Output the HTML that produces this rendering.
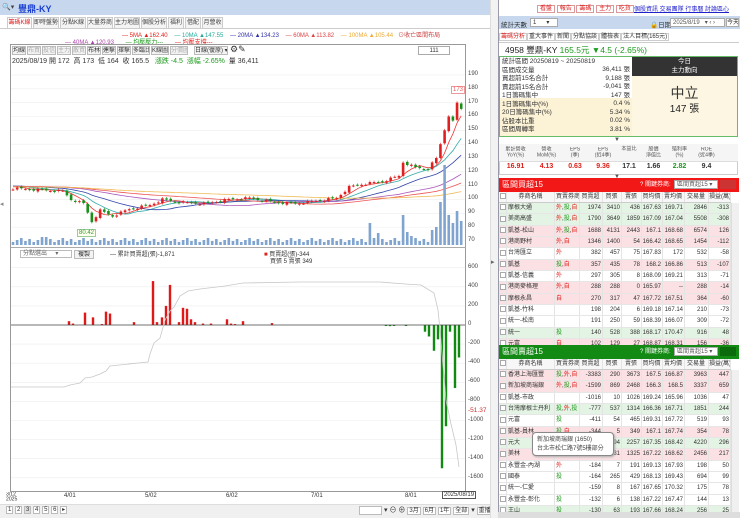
<!DOCTYPE html>
<html><head><meta charset="utf-8">
<style>
*{box-sizing:border-box;margin:0;padding:0}
body{width:740px;height:518px;overflow:hidden;background:#fff;font-family:"Liberation Sans","Noto Sans CJK TC",sans-serif;font-size:7px;color:#333;position:relative}
.a{position:absolute;white-space:nowrap}
.tab{position:absolute;top:17px;height:11px;border:1px solid #ccc;border-bottom:none;background:#f4f4f4;font-size:6px;line-height:10px;text-align:center;color:#444;overflow:hidden;white-space:nowrap}
.btn{position:absolute;height:9px;border:1px solid #bbb;background:#f3f3f3;font-size:6px;line-height:8px;text-align:center;color:#333;overflow:hidden;white-space:nowrap}
.row{position:absolute;left:0;width:232px;height:11.33px;border-bottom:1px solid #e6e6e6;font-size:6px;line-height:11px;overflow:hidden}
.row div{position:absolute;top:0;height:100%;border-right:1px solid #e4e4e4;text-align:right;padding-right:1px;overflow:hidden;white-space:nowrap}
.row div.l{text-align:left;padding-left:1px}
.hd{background:#f7f7f7;border-bottom:1px solid #ccc}
.hd div{text-align:center!important}
.p{background:#fbe1e4}.g{background:#e4f4e4}
.r{color:#e0201a}.gr{color:#1b9a1b}
.cb{display:inline-block;width:6px;height:6px;border:1px solid #aaa;background:#fff;vertical-align:middle}
.sb{border:1px solid #bbb;background:#fff;padding:0 1px}
</style></head><body>
<div class="a" style="left:0;top:0;width:740px;height:15px;background:#c7d8ee"></div>
<div class="a" style="left:498px;top:0;width:242px;height:15px;background:#fff;border-left:1px solid #aac"></div>
<div class="a" style="left:2px;top:3px;font-size:7px;color:#444">🔍▾</div>
<div class="a" style="left:18px;top:2px;font-size:9px;color:#1a3fcf;font-weight:bold">豐鼎-KY</div>
<div class="tab" style="left:7px;width:25px;color:#d22;background:#fff">籌碼K線</div>
<div class="tab" style="left:33px;width:26px">即時盤勢</div>
<div class="tab" style="left:60px;width:26px">分點K線</div>
<div class="tab" style="left:87px;width:26px">大量券商</div>
<div class="tab" style="left:114px;width:26px">主力地圖</div>
<div class="tab" style="left:141px;width:26px">個股分析</div>
<div class="tab" style="left:168px;width:16px">福利</div>
<div class="tab" style="left:185px;width:16px">借配</div>
<div class="tab" style="left:202px;width:21px">月營收</div>
<div class="a" style="left:0;top:28px;width:490px;border-top:1px solid #ccc"></div>
<div class="a" style="left:122px;top:30px;font-size:6px"><span class="r">— 5MA ▲162.40</span> &nbsp;&nbsp; <span style="color:#2a9">— 10MA ▲147.55</span> &nbsp;&nbsp; <span style="color:#33a">— 20MA ▲134.23</span> &nbsp;&nbsp; <span style="color:#d44">— 60MA ▲113.82</span> &nbsp;&nbsp; <span style="color:#ea3">— 100MA ▲105.44</span> &nbsp; <span style="color:#c44">⊙收亡區間布局</span></div>
<div class="a" style="left:65px;top:37px;font-size:6px"><span style="color:#a4a">— 40MA ▲120.93</span> &nbsp;&nbsp;&nbsp;&nbsp;&nbsp; <span class="gr">— 均壓壓力---</span> &nbsp;&nbsp;&nbsp;&nbsp;&nbsp; <span class="r">— 均壓支撐---</span></div>
<div class="a" style="left:10px;top:44px;width:456px;height:448px;border:1px solid #999"></div>
<div class="btn" style="left:12px;top:46px;width:14px">均線</div><div class="btn" style="left:27px;top:46px;width:14px;color:#aaa">布買</div><div class="btn" style="left:42px;top:46px;width:14px;color:#aaa">投信</div><div class="btn" style="left:57px;top:46px;width:14px;color:#aaa">主力</div><div class="btn" style="left:72px;top:46px;width:14px;color:#aaa">散買</div><div class="btn" style="left:87px;top:46px;width:14px">布林</div><div class="btn" style="left:102px;top:46px;width:14px">連擊</div><div class="btn" style="left:117px;top:46px;width:14px">擇擊</div><div class="btn" style="left:132px;top:46px;width:18px">多臨比</div><div class="btn" style="left:151px;top:46px;width:18px">K線圖</div><div class="btn" style="left:170px;top:46px;width:18px;color:#aaa">分價圖</div><div class="btn" style="left:194px;top:46px;width:34px">日線(復原) ▾</div>
<div class="a" style="left:230px;top:44px;font-size:9px">⚙✎</div>
<div class="a" style="left:12px;top:56px;font-size:7px">2025/08/19 開 172 &nbsp;高 173 &nbsp;低 164 &nbsp;收 165.5 &nbsp; <span class="gr">漲跌 -4.5 &nbsp;漲幅 -2.65%</span> &nbsp;量 36,411</div>
<div class="a" style="left:418px;top:46px;width:32px;height:9px;border:1px solid #aaa;font-size:6px;text-align:center;line-height:8px">111</div>
<svg class="a" style="left:0;top:0" width="497" height="518"><g id="grid" stroke="#eee" stroke-width="0.6"></g><g id="c"></g></svg>
<div class="a" id="pl" style="left:468px;top:0;font-size:6px;color:#444"></div>
<div class="a" style="left:451px;top:86px;font-size:6px;color:#e55;border:1px solid #e99;background:#fff;padding:0 1px">173</div>
<div class="a" style="left:77px;top:229px;font-size:6px;color:#393;border:1px solid #9c9;background:#ffe;padding:0 1px">80.42</div>
<div class="a" style="left:11px;top:247px;width:455px;border-top:1px solid #aaa"></div>
<div class="a" style="left:20px;top:250px;width:52px;height:8px;border:1px solid #bbb;font-size:6px;line-height:7px;color:#666;padding-left:2px">分點選出 &nbsp;&nbsp;&nbsp;&nbsp;▾</div>
<div class="btn" style="left:74px;top:250px;width:20px">複製</div>
<div class="a" style="left:110px;top:249px;font-size:6px">— 累計買賣超(張)-1,871</div>
<div class="a" style="left:264px;top:249px;font-size:6px"><span class="r">■</span> 買賣超(張)-344</div>
<div class="a" style="left:270px;top:256px;font-size:6px">買張 5 賣張 349</div>
<div class="a" style="left:468px;top:407px;font-size:6.5px;color:#c33">-51.37</div>
<div class="a" style="left:6px;top:492px;font-size:6px;line-height:6px;transform:scale(.85);transform-origin:0 0">3/12<br>2025</div>
<div class="a" style="left:64px;top:493px;font-size:6px">4/01</div>
<div class="a" style="left:145px;top:493px;font-size:6px">5/02</div>
<div class="a" style="left:226px;top:493px;font-size:6px">6/02</div>
<div class="a" style="left:311px;top:493px;font-size:6px">7/01</div>
<div class="a" style="left:405px;top:493px;font-size:6px">8/01</div>
<div class="a" style="left:442px;top:491px;font-size:6px;border:1px solid #555;padding:0 1px;background:#fff">2025/08/19</div>
<div class="a" style="left:0;top:504px;width:490px;height:14px;background:#f0f0f0;border-top:1px solid #ddd"></div>
<div class="a" style="left:6px;top:506px;font-size:6px"><span class="sb">1</span> <span class="sb">2</span> <span class="sb" style="background:#ddd">3</span> <span class="sb">4</span> <span class="sb">5</span> <span class="sb">6</span> <span class="sb">▸</span></div>
<div class="a" style="left:359px;top:506px;width:23px;height:9px;border:1px solid #bbb;background:#fff"></div>
<div class="a" style="left:384px;top:505px;font-size:7px">▾ ⊖ ⊕ <span class="sb" style="font-size:6px">3月</span> <span class="sb" style="font-size:6px">6月</span> <span class="sb" style="font-size:6px">1年</span> <span class="sb" style="font-size:6px">全部</span> ▾ <span class="sb" style="font-size:6px">重播</span></div>
<div class="a" style="left:0;top:200px;font-size:7px;color:#888">◂</div>
<div class="a" style="left:490px;top:0;width:8px;height:518px;background:#f2f2f2;border-left:1px solid #ddd"></div>
<div class="a" style="left:491px;top:258px;font-size:7px;color:#666">▸</div>

<div class="a" style="left:498px;top:0;width:242px;height:518px;background:#fff;border-left:1px solid #99a"></div>
<div class="a" style="left:537px;top:3px;font-size:6px">
<span style="color:#d22;border:1px solid #d99;padding:0 2px">看盤</span> <span style="color:#d22;border:1px solid #d99;padding:0 2px">報告</span> <span style="color:#d22;border:1px solid #d99;padding:0 2px">籌碼</span> <span style="color:#d22;border:1px solid #d99;padding:0 2px">主力</span> <span style="color:#d22;border:1px solid #d99;padding:0 2px">吃貨</span></div>
<div class="a" style="left:634px;top:4px;font-size:6px;color:#22c;text-decoration:underline">個股資訊 交易團隊 行事曆 討論區心</div>
<div class="a" style="left:499px;top:16px;width:241px;height:13px;background:#c7d8ee"></div>
<div class="a" style="left:501px;top:19px;font-size:6.5px">統計天數</div>
<div class="a" style="left:530px;top:18px;width:28px;height:9px;background:#fff;border:1px solid #aaa;font-size:6px;line-height:8px;padding-left:2px">1 &nbsp;&nbsp;&nbsp;&nbsp;&nbsp;▾</div>
<div class="a" style="left:650px;top:19px;font-size:6.5px">🔒日期</div>
<div class="a" style="left:670px;top:18px;width:55px;height:9px;background:#fff;border:1px solid #aaa;font-size:6px;line-height:8px;padding-left:2px;color:#555">2025/8/19 &nbsp;&nbsp;▾ ‹ ›</div>
<div class="a" style="left:726px;top:18px;width:13px;height:9px;background:#fff;border:1px solid #aaa;font-size:6px;line-height:8px;overflow:hidden">今天</div>
<div class="a" style="left:499px;top:31px;font-size:6px">
<span style="color:#d22;border:1px solid #ccc;padding:0 1px">籌碼分析</span><span style="border:1px solid #ccc;padding:0 1px">重大事件</span><span style="border:1px solid #ccc;padding:0 1px">新聞</span><span style="border:1px solid #ccc;padding:0 1px">分點協談</span><span style="border:1px solid #ccc;padding:0 1px">體檢表</span><span style="border:1px solid #ccc;padding:0 1px">法人目標(165元)</span></div>
<div class="a" style="left:499px;top:42px;width:240px;border-top:1px solid #ccc"></div>
<div class="a" style="left:505px;top:44px;font-size:8.5px;color:#222">4958 豐鼎-KY <span class="gr">165.5元 ▼4.5 (-2.65%)</span></div>
<div class="a" style="left:499px;top:56px;width:239px;height:81px;border:1px solid #6b6;background:#fff"></div>
<div class="a" style="left:500px;top:98px;width:132px;height:38px;background:#fcf2d6"></div>
<div class="a" style="left:502px;top:58px;font-size:6.5px;line-height:8.5px">統計區間 20250819 ~ 20250819<br>區間成交量<br>買超前15名合計<br>賣超前15名合計<br>1日籌碼集中<br>1日籌碼集中(%)<br>20日籌碼集中(%)<br>佔股本比重<br>區間周轉率</div>
<div class="a" style="left:590px;top:66px;font-size:6.5px;line-height:8.5px;text-align:right;width:40px">36,411 張<br>9,188 張<br>-9,041 張<br>147 張<br>0.4 %<br>5.34 %<br>0.02 %<br>3.81 %</div>
<div class="a" style="left:632px;top:57px;width:105px;height:79px;background:#fcf6e2"></div>
<div class="a" style="left:632px;top:57px;width:105px;height:19px;background:#333;color:#fff;font-size:6.5px;text-align:center;line-height:9px">今日<br>主力動向</div>
<div class="a" style="left:632px;top:83px;width:105px;text-align:center;font-size:14px;color:#333">中立</div>
<div class="a" style="left:632px;top:100px;width:105px;text-align:center;font-size:10px;color:#222">147 張</div>
<div class="a" style="left:614px;top:137px;font-size:6px;color:#555">▼</div>
<div class="a" style="left:499px;top:144px;width:239px;height:31px;border:1px solid #ccc"></div>
<div class="a" style="left:499px;top:144px;width:239px;height:18px;background:#f5f5f5;border-bottom:1px solid #ddd"></div>
<div class="a" id="fund" style="left:499px;top:146px;width:239px;font-size:6px"></div>
<div class="a" style="left:614px;top:174px;font-size:6px;color:#555">▼</div>
<div class="a" style="left:499px;top:178px;width:240px;height:14px;background:#f31818;color:#fff;font-size:8px;line-height:14px;padding-left:3px">區間買超15<span style="position:absolute;left:141px;font-size:6px">? 關鍵券商:</span></div>
<div class="a" style="left:674px;top:180px;width:44px;height:9px;background:#fff;border:1px solid #aaa;font-size:6px;line-height:8px;color:#555;padding-left:2px;overflow:hidden">區間買超15 ▾</div>
<div class="a" style="left:720px;top:180px;width:16px;height:9px;background:#c33"></div>
<div class="a" style="left:499px;top:192px;width:240px;height:153px;overflow:hidden" id="bt"></div>
<div class="a" style="left:499px;top:345px;width:240px;height:14px;background:#138a13;color:#fff;font-size:8px;line-height:14px;padding-left:3px">區間賣超15<span style="position:absolute;left:141px;font-size:6px">? 關鍵券商:</span></div>
<div class="a" style="left:674px;top:347px;width:44px;height:9px;background:#fff;border:1px solid #aaa;font-size:6px;line-height:8px;color:#555;padding-left:2px;overflow:hidden">區間賣超15 ▾</div>
<div class="a" style="left:720px;top:347px;width:16px;height:9px;background:#0b6a0b"></div>
<div class="a" style="left:499px;top:359px;width:240px;height:153px;overflow:hidden" id="st"></div>
<div class="a" style="left:731px;top:203px;width:8px;height:142px;background:#f0f0f0;border-left:1px solid #ddd"></div>
<div class="a" style="left:731px;top:370px;width:8px;height:142px;background:#f0f0f0;border-left:1px solid #ddd"></div>
<div class="a" style="left:532px;top:432px;width:82px;height:24px;background:#fff;border:1px solid #888;border-radius:4px;font-size:6px;line-height:9px;padding:3px 4px;color:#444;box-shadow:1px 1px 2px #aaa">新加坡商瑞銀 (1650)<br>台北市松仁路7號5樓部分</div>
<div class="a" style="left:498px;top:512px;width:242px;height:6px;background:#ddd"></div>

<script>
(function(){
var h=["累計營收<br>YoY(%)","營收<br>MoM(%)","EPS<br>(季)","EPS<br>(近4季)","本益比","股價<br>淨值比","殖利率<br>(%)","ROE<br>(近4季)"];
var v=[["16.91","r"],["4.13","r"],["0.63","r"],["9.36","r"],["17.1",""],["1.66",""],["2.82","gr"],["9.4",""]];
var w=[33,29,28,28,24,25,27,27],s="";var x=0;
for(var i=0;i<8;i++){s+='<div style="position:absolute;left:'+x+'px;top:0;width:'+w[i]+'px;text-align:center;line-height:7px;color:#555;transform:scale(.85)">'+h[i]+'</div>';
s+='<div class="'+v[i][1]+'" style="position:absolute;left:'+x+'px;top:17px;width:'+w[i]+'px;text-align:center;font-size:7px;font-weight:bold">'+v[i][0]+'</div>';x+=w[i];}
document.getElementById('fund').innerHTML=s;
})();
function tb(id,rows){
var cw=[8,48,25,23,19,20,21,22,24,22];
var hd=['<span class="cb"></span>','券商名稱','買賣券商','買賣超','買張','賣張','買均價','賣均價','交易量','損益(萬)'];
function mk(cells,cls,top){var s='<div class="row '+cls+'" style="top:'+top+'px">',x=0;for(var i=0;i<10;i++){s+='<div class="'+(i<3?'l':'')+'" style="left:'+x+'px;width:'+cw[i]+'px">'+cells[i]+'</div>';x+=cw[i];}return s+'</div>';}
var s=mk(hd,'hd',0);
rows.forEach(function(r,k){var t=r[2].replace(/外/g,'<span class="r">外</span>').replace(/投/g,'<span class="gr">投</span>').replace(/自/g,'<span class="r">自</span>');
s+=mk(['<span class="cb"></span>',r[1],t,r[3],r[4],r[5],r[6],r[7],r[8],r[9]],r[0],11+k*11.33);});
document.getElementById(id).innerHTML=s;}
tb('bt',[["g","摩根大通","外,投,自",1974,3410,436,"167.63","169.71",2846,-313],["g","美商高盛","外,投,自",1790,3649,1859,"167.09","167.04",5508,-308],["p","凱基-松山","外,投,自",1688,4131,2443,"167.1","168.68",6574,126],["p","港商野村","外,自",1346,1400,54,"166.42","168.65",1454,-112],["","台灣匯立","外",382,457,75,"167.83","172",532,-58],["p","凱基","投,自",357,435,78,"168.2","166.86",513,-107],["","凱基-信義","外",297,305,8,"168.09","169.21",313,-71],["p","港商麥格理","外,自",288,288,0,"165.97","--",288,-14],["p","摩根永昌","自",270,317,47,"167.72","167.51",364,-60],["","凱基-竹科","",198,204,6,"169.18","167.14",210,-73],["","統一-松南","",191,250,59,"168.39","166.07",309,-72],["g","統一","投",140,528,388,"168.17","170.47",916,48],["p","元富","自",102,129,27,"168.87","168.31",156,-36]]);
tb('st',[["p","香港上海匯豐","投,外,自",-3383,290,3673,"167.5","166.87",3963,447],["p","新加坡商瑞銀","外,投,自",-1599,869,2468,"166.3","168.5",3337,659],["","凱基-市政","",-1016,10,1026,"169.24","165.96",1036,47],["g","台灣摩根士丹利","投,外,投",-777,537,1314,"166.36","167.71",1851,244],["","元富","投",-411,54,465,"169.31","167.72",519,93],["p","凱基-員林","投,自",-344,5,349,"167.1","167.74",354,78],["g","元大","",-1963,294,2257,"167.35","168.42",4220,296],["p","美林","",-1194,131,1325,"167.22","168.62",2456,217],["","永豐金-內湖","外",-184,7,191,"169.13","167.93",198,50],["","國泰","投",-164,265,429,"168.13","169.43",694,99],["","統一-仁愛","",-159,8,167,"167.65","170.32",175,78],["","永豐金-彰化","投",-132,6,138,"167.22","167.47",144,13],["g","王山","投",-130,63,193,"167.66","168.24",256,25]]);
(function(){
var NS="http://www.w3.org/2000/svg",g=document.getElementById('c'),gr=document.getElementById('grid');
function el(t,a,p){var e=document.createElementNS(NS,t);for(var k in a)e.setAttribute(k,a[k]);(p||g).appendChild(e);return e;}
var pl="";
function py(p){return 75+(190-p)*1.383;}
for(var p=70;p<=190;p+=10){el('line',{x1:11,x2:465,y1:py(p),y2:py(p)},gr);pl+='<div style="position:absolute;top:'+(py(p)-4)+'px">'+p+'</div>';}
function ly(v){return 325-v*0.0955;}
for(var v=600;v>=-1600;v-=200){el('line',{x1:11,x2:465,y1:ly(v),y2:ly(v)},gr);pl+='<div style="position:absolute;top:'+(ly(v)-4)+'px">'+v+'</div>';}
document.getElementById('pl').innerHTML=pl;
var kf=[[0,108],[12,106],[14,100],[17,97],[19,84],[21,92],[24,88],[28,93],[33,96],[36,100],[40,98],[46,97],[52,100],[57,101],[63,98],[68,97],[73,99],[78,101],[81,109],[84,111],[89,113],[93,117],[94,127],[97,123],[100,122],[102,130],[103,140],[104,150],[105,160],[106,157],[107,170],[108,165.5]];
var N=109,c=[];
for(var i=0;i<N;i++){for(var k=0;k<kf.length-1;k++)if(i>=kf[k][0]&&i<=kf[k+1][0]){var t=(i-kf[k][0])/(kf[k+1][0]-kf[k][0]||1);c.push(kf[k][1]+(kf[k+1][1]-kf[k][1])*t+((i*7919)%5-2)*0.4*(i<102?1:0));break;}}
function X(i){return 11+i*4.15+2;}
var pre=[];for(var i=0;i<100;i++)pre.push(110-i*0.02);
var all=pre.slice().reverse().concat(c);
function ma(n,col){var d="";for(var i=0;i<N;i++){var s=0;for(var j=0;j<n;j++)s+=all[100+i-j];d+=(i?"L":"M")+X(i).toFixed(1)+","+py(s/n).toFixed(1);}el('path',{d:d,fill:"none",stroke:col,"stroke-width":0.8});}
ma(5,"#e33");ma(10,"#3aa");ma(20,"#34a");ma(40,"#a5b");ma(60,"#e55");ma(100,"#eb5");
for(var i=0;i<N;i++){var h=3+((i*37)%5);if(i==7||i==8)h=8;if(i==86)h=22;if(i==88)h=12;if(i==94)h=30;if(i==95)h=13;if(i==96)h=9;if(i>=103){h=[20,25,43,80,30,22,34,24][i-101]||20;}if(i==101)h=15;if(i==102)h=18;
el('rect',{x:X(i)-1.3,y:245-h,width:2.6,height:h,fill:"#7fa4d0"});}
for(var i=0;i<N;i++){var cl=c[i],op=i?c[i-1]+((i*13)%3-1)*0.6:cl;var up=cl>=op;var col=up?"#e02020":"#18901a";
var hi=Math.max(op,cl)+1,lo=Math.min(op,cl)-1;el('line',{x1:X(i),x2:X(i),y1:py(hi),y2:py(lo),stroke:col,"stroke-width":0.6});
var y1=py(Math.max(op,cl)),hh=Math.max(1,py(Math.min(op,cl))-y1);el('rect',{x:X(i)-1.3,y:y1,width:2.6,height:hh,fill:col});}
var rb=[[69,40],[73,15],[85,130],[93,80],[102,10],[106,140],[110,120],[134,30],[153,460],[157,30],[162,80],[166,200],[170,420],[179,30],[183,180],[187,170],[191,60],[195,30],[203,15],[211,15],[227,60],[231,15],[235,10],[243,40],[272,20],[386,-10],[390,-12],[394,-8],[406,-6]];
var gb=[[425,-70],[429,-120],[434,-270],[438,-150],[442,-1500],[446,-1060],[450,-70],[455,-660],[459,-340]];
rb.concat(gb).forEach(function(b){var y=ly(Math.max(b[1],0)),h=Math.abs(b[1])*0.0955;el('rect',{x:b[0]-1.2,y:y,width:2.4,height:Math.max(h,1),fill:b[1]>0?"#e01818":"#118a11"});});
el('line',{x1:11,x2:465,y1:325,y2:325,stroke:"#444","stroke-width":0.7});
el('polyline',{points:"11,387 64,387 70,385 80,383 85,378 92,377 100,374 106,371 110,366 148,362 150,354 154,343 160,338 165,320 170,311 174,307 180,296 188,291 200,289 225,286 243,283 300,282 380,282 405,284 421,285 434,293 438,310 440,330 446,400 451,424 456,445 459,467","fill":"none",stroke:"#c8c8c8","stroke-width":0.8});
})();
</script>
</body></html>
